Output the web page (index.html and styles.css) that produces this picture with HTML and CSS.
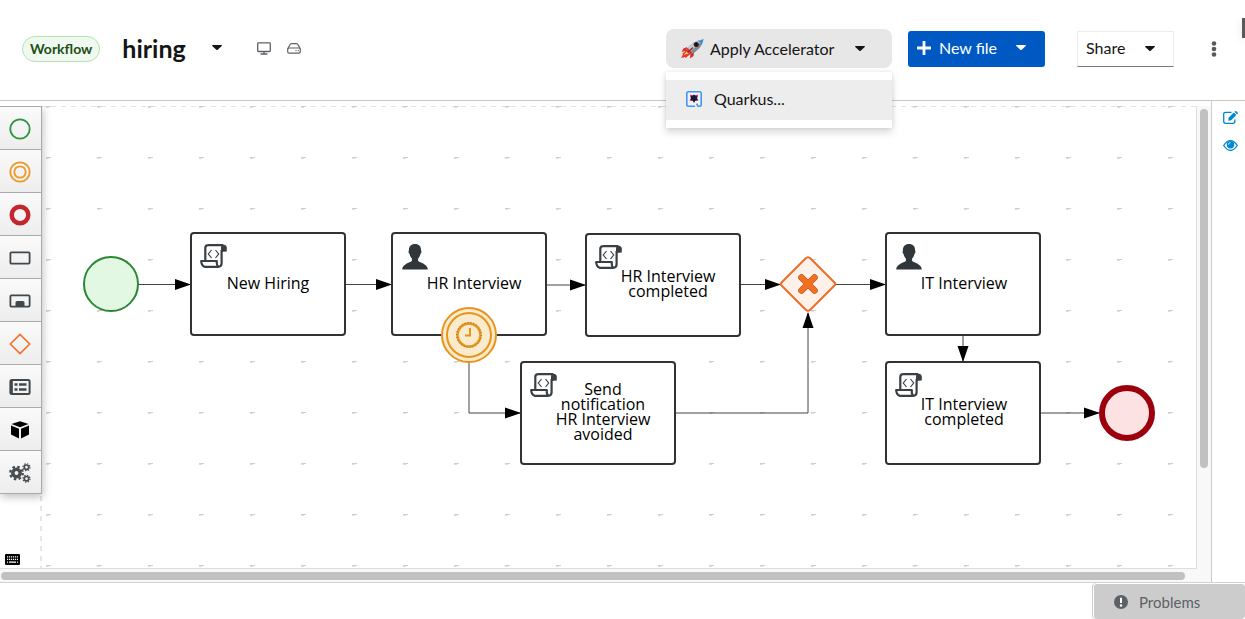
FILE: index.html
```html
<!DOCTYPE html>
<html lang="en">
<head>
<meta charset="utf-8">
<meta name="viewport" content="width=device-width, initial-scale=1">
<title>hiring</title>
<link rel="stylesheet" href="styles.css">
</head>
<body>
<svg class="defs" aria-hidden="true">
  <defs>
    <symbol id="caret" viewBox="0 0 10 5"><path d="M.6 0h8.800q.9.2.3 1L5.700 4.700q-.7.6-1.400 0L.3 1Q-.3.2.6 0z" fill="currentColor"/></symbol>
    <symbol id="script" viewBox="0 0 27 24">
      <path d="M8 1.200h15M5.300 16V4q0-2.800 2.800-2.800M21.600 6v13.500q-.2 3.300-3.500 3.300H4.500Q1.300 21.500 1.200 17h15.600c-.2 3 .3 5.300 2 5.600" fill="none" stroke="#393f44" stroke-width="2.200" stroke-linejoin="round"/>
      <path d="M21 8V3.500Q21 .4 23.500.4T26.800 3v4.600z" fill="#393f44"/>
      <path d="M11.500 6 8.300 10l3.200 4M15.500 6l3.200 4-3.200 4" fill="none" stroke="#393f44" stroke-width="1.200"/>
    </symbol>
    <symbol id="user" viewBox="0 0 26 26"><path d="M13 0c4.200 0 6.300 2.700 6.100 6.800.8.700.2 2.700-.7 3.200-.4 2.300-1.300 3.600-2.300 4.500v2.200c.8 1.900 9.900 2.900 9.700 8.900H.2c-.2-6 8.900-7 9.700-8.900v-2.200C8.900 13.600 8 12.300 7.600 10c-.9-.5-1.500-2.500-.7-3.200C6.700 2.700 8.800 0 13 0z" fill="#30373b"/></symbol>
  </defs>
</svg>

<header class="toolbar">
  <span class="badge">Workflow</span>
  <button class="file-name" type="button">hiring <svg class="caret"><use href="#caret"/></svg></button>
  <div class="storage">
    <svg width="14" height="13" viewBox="0 0 14 13" fill="none" stroke="#5e6267" stroke-width="1.300" role="img" aria-label="Browser"><rect x=".7" y=".8" width="12.600" height="8.700" rx=".8"/><path d="M3.500 12h7M7 9.500V12"/></svg>
    <svg width="14" height="11" viewBox="0 0 14 11" fill="none" stroke="#5e6267" stroke-width="1.200" role="img" aria-label="Drive"><path d="M.7 5.800 2.800 2Q3.400.8 4.700.7h4.600q1.300.1 1.900 1.300l2.100 3.800"/><rect x=".7" y="5" width="12.600" height="5.200" rx="1.400"/><path d="M8.500 7.600h1M10.800 7.600h1"/></svg>
  </div>
  <div class="accelerator">
    <button class="accelerator-toggle" type="button" aria-expanded="true">
      <svg width="23" height="20" viewBox="0 0 23 20" aria-hidden="true">
        <path d="M6 8 2.500 9.500.5 13l5-1.500zM13 13l-.5 4L9 19.500l.5-5z" fill="#d52b26"/>
        <path d="M5 11.500 1 15l1 .5L0 19l4-1 .5 1L9.500 15z" fill="#e93427"/>
        <path d="M5.500 12.500 2.500 16l2-.5L9 14z" fill="#ffc63c"/>
        <path d="M4.500 12Q10 2.500 22.500.3 21 10.500 9.500 15.500z" fill="#7b8c9a"/>
        <path d="M5 11.500Q10.500 3 22.500.3 18 5.500 8 13.500z" fill="#c5d0d9"/>
        <path d="m17 1.900 5.500-1.600-1.800 5.200z" fill="#3a92d9"/>
        <path d="m4.500 12 2.200-3.200 4.600 5.500-2 1.200z" fill="#d83a31"/>
        <circle cx="15.300" cy="5.500" r="2.600" fill="#45211f"/><circle cx="15.300" cy="5.500" r="1.200" fill="#111"/>
        <path d="m7 13 5-4.500" stroke="#a92322" stroke-width="1.600"/>
      </svg>
      <span>Apply Accelerator</span>
      <svg class="caret"><use href="#caret"/></svg>
    </button>
    <div class="menu" role="menu">
      <button class="menu-item" type="button" role="menuitem">
        <svg width="16" height="16" viewBox="0 0 16 16" aria-hidden="true"><path d="M9 15.200H2.500Q.8 15.200.8 13.500v-11Q.8.8 2.500.8h11q1.700 0 1.700 1.700v11q0 1.700-1.700 1.700H12l-1.500-2.500" fill="#e9f5ff" stroke="#4695eb" stroke-width="1.600"/><path d="m4 3.500 4 1.300L12 3.500l-.8 3.700 1.300 2.300-3.300.5L8 12.200 6.800 10l-3.300-.5 1.300-2.300z" fill="#df234e"/><path d="m8 3.500 1.500 1.300 2 .4-.7 1.900.7 2-2 .5L8 11 6.500 9.600l-2-.5.7-2-.7-1.900 2-.4z" fill="#111c38"/></svg>
        <span>Quarkus...</span>
      </button>
    </div>
  </div>
  <button class="new-file" type="button">
    <svg width="14" height="14" viewBox="0 0 14 14" aria-hidden="true"><path d="M7 0v14M0 7h14" stroke="#fff" stroke-width="2.800"/></svg>
    <span>New file</span>
    <svg class="caret"><use href="#caret"/></svg>
  </button>
  <button class="share" type="button"><span>Share</span> <svg class="caret"><use href="#caret"/></svg></button>
  <button class="kebab" type="button" aria-label="More actions"><svg width="6" height="16" viewBox="0 0 6 16" fill="#555a5f"><circle cx="3" cy="2.500" r="2.300"/><circle cx="3" cy="8" r="2.300"/><circle cx="3" cy="13.500" r="2.300"/></svg></button>
  <span class="edge-tab"></span>
</header>

<main class="workspace">
  <section class="editor">
    <div class="stage">
      <svg class="layer" aria-hidden="true">
        <defs>
          <pattern id="grid" x="46" y="0" width="51" height="51" patternUnits="userSpaceOnUse"><path d="M0 .5h5" stroke="#cfcfcf"/><path d="M0 1.500h3" stroke="#dedede"/></pattern>
          <marker id="arrow" markerUnits="userSpaceOnUse" markerWidth="16" markerHeight="12" refX="15" refY="6" orient="auto"><path d="M0 .5 16 6 0 11.500z"/></marker>
        </defs>
        <path d="M41 .5h1155" stroke="#e3e3e3" stroke-dasharray="5 5"/>
        <path d="M41 0v462" stroke="#e6e6e6" stroke-width="2" stroke-dasharray="5 5"/>
        <rect class="grid-fill" x="46" y="0" fill="url(#grid)"/>
        <g fill="none" stroke="#444">
          <path d="M138 178.500h52" marker-end="url(#arrow)"/>
          <path d="M346 178.500h45" marker-end="url(#arrow)"/>
          <path d="M547 179h38" marker-end="url(#arrow)"/>
          <path d="M741 178.500h39" marker-end="url(#arrow)"/>
          <path d="M836 178.500h49" marker-end="url(#arrow)"/>
          <path d="M469 256v51h51" marker-end="url(#arrow)"/>
          <path d="M676 307h132V207" marker-end="url(#arrow)"/>
          <path d="M963 230v25" marker-end="url(#arrow)"/>
          <path d="M1041 307h58" marker-end="url(#arrow)"/>
        </g>
        <circle cx="111" cy="178" r="27" fill="#e2f8e3" stroke="#2b8737" stroke-width="2"/>
        <path d="m805.500 152.500-24 24q-1.500 1.500 0 3l24 24q2.500 2.500 5 0l24-24q1.500-1.500 0-3l-24-24q-2.500-2.500-5 0z" fill="#fef1e9" stroke="#ed6d24" stroke-width="2"/>
        <path d="m801.500 171.500 13 13m0-13-13 13" stroke="#9b552c" stroke-width="6.500" stroke-linecap="round"/>
        <path d="m801.500 171.500 13 13m0-13-13 13" stroke="#f37021" stroke-width="5.500" stroke-linecap="round"/>
        <circle cx="1127" cy="307" r="25" fill="#fde2e4" stroke="#9d000d" stroke-width="6"/>
      </svg>
      <article class="task new-hiring"><svg class="icon-script"><use href="#script"/></svg>New Hiring</article>
      <article class="task hr-interview"><svg class="icon-user"><use href="#user"/></svg>HR Interview</article>
      <article class="task hr-completed"><svg class="icon-script"><use href="#script"/></svg>HR Interview completed</article>
      <article class="task hr-avoided"><svg class="icon-script"><use href="#script"/></svg>Send notification HR Interview avoided</article>
      <article class="task it-interview"><svg class="icon-user"><use href="#user"/></svg>IT Interview</article>
      <article class="task it-completed"><svg class="icon-script"><use href="#script"/></svg>IT Interview completed</article>
      <svg class="timer" viewBox="0 0 56 56" role="img" aria-label="Timer" fill="none" stroke="#e8941c" stroke-width="2"><circle cx="28" cy="28" r="27" fill="#faebcd"/><circle cx="28" cy="28" r="22"/><circle cx="28" cy="28" r="11.500" stroke-width="2.500"/><circle cx="28" cy="28" r="12.500" stroke="#805a20" stroke-width=".8" stroke-dasharray="1 2"/><path d="M29 21v7.500h-5"/></svg>

      <nav class="palette" aria-label="Palette">
        <button type="button" aria-label="Start events"><svg viewBox="0 0 22 22"><circle cx="11" cy="11" r="9.700" fill="none" stroke="#2d9641" stroke-width="1.800"/></svg></button>
        <button type="button" aria-label="Intermediate events"><svg viewBox="0 0 22 22" fill="none" stroke="#ec9928" stroke-width="1.800"><circle cx="11" cy="11" r="9.700"/><circle cx="11" cy="11" r="5.700"/></svg></button>
        <button type="button" aria-label="End events"><svg viewBox="0 0 22 22"><circle cx="11" cy="11" r="8.300" fill="none" stroke="#c4262e" stroke-width="4.400"/></svg></button>
        <button type="button" aria-label="Activities"><svg viewBox="0 0 22 22"><rect x="1.400" y="5.400" width="19.200" height="11.200" rx="1" fill="none" stroke="#41484d" stroke-width="1.800"/></svg></button>
        <button type="button" aria-label="Subprocesses"><svg viewBox="0 0 22 22"><rect x="1.400" y="5.400" width="19.200" height="11.200" rx="1" fill="none" stroke="#41484d" stroke-width="1.800"/><path d="M6.500 16v-3.500q0-1.500 1.500-1.500h6q1.500 0 1.500 1.500V16z" fill="#41484d"/></svg></button>
        <button type="button" aria-label="Gateways"><svg viewBox="0 0 22 22"><path d="m11 1.300 9.700 9.700-9.700 9.700L1.300 11z" fill="none" stroke="#f1742c" stroke-width="1.700" stroke-linejoin="round"/></svg></button>
        <button type="button" aria-label="Containers"><svg viewBox="0 0 22 22"><rect x="1.400" y="4" width="19.200" height="14" rx="1.500" fill="none" stroke="#41484d" stroke-width="2"/><path d="M2.500 4v14M5.500 8.500h3m1.500 0h7.500m-12 5h3m1.500 0h7.500" stroke="#41484d" stroke-width="2.700"/></svg></button>
        <button type="button" aria-label="Artifacts"><svg viewBox="0 0 22 22"><path d="m11 2.300 8.500 2.700-8.500 3.300L2.500 5zM2 6.500l8 3.200v9.800l-8-4zM20 6.500l-8 3.200v9.800l8-4z"/></svg></button>
        <button type="button" aria-label="Custom tasks"><svg viewBox="0 0 22 22" fill="none" stroke="#474d51"><circle cx="7.500" cy="11" r="3.700" stroke-width="3.500"/><circle cx="7.500" cy="11" r="6.300" stroke-width="2.200" stroke-dasharray="2.500 2.450"/><circle cx="17.500" cy="5.200" r="2.200" stroke-width="1.700"/><circle cx="17.500" cy="5.200" r="3.500" stroke-width="1.200" stroke-dasharray="1.400 1.350"/><circle cx="17.500" cy="16.700" r="2.200" stroke-width="1.700"/><circle cx="17.500" cy="16.700" r="3.500" stroke-width="1.200" stroke-dasharray="1.400 1.350"/></svg></button>
      </nav>
      <button class="keyboard" type="button" aria-label="Keyboard shortcuts"><svg width="15" height="11" viewBox="0 0 15 11"><rect width="15" height="11" rx="1"/><path d="M2 2.800h11M2 5.400h11" stroke="#fff" stroke-width="1.300" stroke-dasharray="1.200 .8"/><path d="M2 8.100h1m1 0h7m1 0h1" stroke="#fff" stroke-width="1.300"/></svg></button>
    </div>
    <div class="scroll-y"><span></span></div>
    <div class="scroll-x"><span></span></div>
  </section>
  <aside class="dock">
    <button type="button" aria-label="Properties"><svg width="15" height="13" viewBox="0 0 15 13"><path d="M8.500 1.300H2.700Q.7 1.300.7 3.300v7q0 2 2 2h7.200q2 0 2-2V8.500" fill="none" stroke="#0088ce" stroke-width="1.300"/><path d="m5.300 9.700.3-3L10.800 1.500l2.600 2.600L8.200 9.300zM11.500.8l.6-.6q.6-.4 1.200.1l1.300 1.300q.5.600.1 1.200l-.6.600z" fill="#0088ce"/></svg></button>
    <button type="button" aria-label="Preview"><svg width="15" height="11" viewBox="0 0 15 11"><path d="M.7 5.500Q7.500-4.300 14.300 5.500 7.500 15.300.7 5.500z" fill="#fff" stroke="#0088ce" stroke-width="1.300"/><circle cx="7.500" cy="4.800" r="3.700" fill="#0088ce"/><path d="M5.500 4.700q0-2 2-2" fill="none" stroke="#fff" stroke-width=".8"/></svg></button>
  </aside>
</main>

<footer class="status">
  <button class="problems" type="button"><svg width="14" height="14" viewBox="0 0 14 14" aria-hidden="true"><circle cx="7" cy="7" r="7" fill="#5d6166"/><path d="M7 2.700v5.300" stroke="#fff" stroke-width="2"/><circle cx="7" cy="10.500" r="1.200" fill="#fff"/></svg><span>Problems</span></button>
</footer>
</body>
</html>
```
FILE: styles.css
```css
* { box-sizing: border-box; }
body {
  margin: 0;
  min-height: 100vh;
  display: flex;
  flex-direction: column;
  background: #fff;
  color: #151515;
  font: 16px/24px Lato, "Noto Sans", sans-serif;
}
button { margin: 0; padding: 0; border: 0; background: none; color: inherit; font: inherit; cursor: pointer; }
svg { display: block; flex: none; }
.defs { position: absolute; width: 0; height: 0; }
.caret { width: 10px; height: 5px; }

.toolbar {
  position: relative;
  display: flex;
  align-items: center;
  padding: 29px 26px 32px 22px;
  border-bottom: 1px solid #c7c7c7;
}
.badge {
  padding: 0 7px;
  border: 1px solid #b3e2b3;
  border-radius: 13px;
  background: #f0f9f0;
  color: #1e4f18;
  font-size: 14px;
  font-weight: 700;
}
.file-name { display: flex; align-items: center; gap: 26px; margin-left: 22px; padding-bottom: 2px; font-size: 25px; font-weight: 700; line-height: 32px; }
.storage { display: flex; align-items: center; gap: 16px; margin-left: 35px; }
.accelerator { position: relative; width: 226px; margin-left: auto; }
.accelerator-toggle {
  display: flex;
  align-items: center;
  width: 100%;
  height: 39px;
  padding: 0 27px 0 15px;
  border-radius: 8px;
  background: #e7e7e7;
}
.accelerator-toggle span { margin-left: 6px; }
.accelerator-toggle .caret { margin-left: auto; }
.menu {
  position: absolute;
  z-index: 3;
  top: 43px;
  left: 0;
  width: 100%;
  padding: 8px 0;
  background: #fff;
  box-shadow: 0 4px 8px rgba(3, 3, 3, .16), 0 0 4px rgba(3, 3, 3, .08);
}
.menu-item { display: flex; align-items: center; gap: 12px; width: 100%; height: 40px; padding: 0 20px 2px; background: #ededed; }
.new-file {
  display: flex;
  align-items: center;
  gap: 8px;
  width: 137px;
  height: 36px;
  margin-left: 16px;
  padding: 0 19px 2px 9px;
  border-radius: 3px;
  background: #0059c3;
  color: #fff;
}
.new-file .caret, .share .caret { margin-left: auto; }
.share {
  display: flex;
  align-items: center;
  width: 97px;
  height: 36px;
  margin-left: 32px;
  padding: 0 18px 1px 8px;
  border: 1px solid #ededed;
  border-bottom-color: #77797c;
}
.kebab { margin-left: 35px; padding: 4px 2px; }
.edge-tab { position: absolute; top: 18px; right: 0; width: 3px; height: 20px; background: #595959; box-shadow: 0 2px 8px rgba(0, 0, 0, .15); }

.workspace { flex: 1; display: flex; }
.editor {
  flex: 1;
  min-width: 0;
  display: grid;
  grid-template: 1fr 13px / 1fr 14px;
  padding-top: 5px;
}
.stage {
  position: relative;
  min-height: 463px;
  overflow: hidden;
  border-right: 1px solid #ddd;
  border-bottom: 1px solid #ddd;
}
.layer { position: absolute; inset: 0; width: 100%; height: 100%; }
.grid-fill { width: 100%; height: 100%; }
.scroll-y { padding: 3px 0 0 3px; background: #f8f8f8; }
.scroll-y span { display: block; width: 8px; height: 78%; border-radius: 4px; background: #c1c1c1; }
.scroll-x { grid-column: 1 / -1; padding: 3px 26px 0 1px; background: #f8f8f8; }
.scroll-x span { display: block; height: 8px; border-radius: 4px; background: #c1c1c1; }

.task {
  position: absolute;
  display: flex;
  align-items: center;
  justify-content: center;
  width: 156px;
  height: 104px;
  padding: 0 28px 2px;
  border: 2px solid #303336;
  border-radius: 4px;
  background: #fff;
  color: #000;
  font: 16px/15px "Open Sans", "Noto Sans", sans-serif;
  text-align: center;
}
.task svg { position: absolute; top: 10px; }
.icon-script { left: 8px; width: 27px; height: 24px; }
.icon-user { left: 9px; width: 26px; height: 26px; }
.new-hiring { left: 190px; top: 126px; }
.hr-interview { left: 391px; top: 126px; padding: 0 20px 2px 30px; }
.hr-completed { left: 585px; top: 127px; padding: 0 20px 2px 30px; }
.hr-avoided { left: 520px; top: 255px; padding: 0 20px 2px 30px; }
.it-interview { left: 885px; top: 126px; padding: 0 20px 2px 22px; }
.it-completed { left: 885px; top: 255px; padding: 0 20px 2px 22px; }
.timer { position: absolute; left: 441px; top: 201px; width: 56px; height: 56px; }

.palette { position: absolute; top: 0; left: 0; width: 42px; border-right: 1px solid #aaa; border-top: 1px solid #aaa; box-shadow: 1px 3px 8px rgba(3, 3, 3, .25); }
.palette button { display: grid; place-items: center; width: 100%; height: 43px; padding: 1px 1px 0 0; border-bottom: 1px solid #aaa; background: linear-gradient(#fafafa, #ededed); }
.palette svg { width: 22px; height: 22px; }
.keyboard { position: absolute; left: 5px; bottom: 3px; }

.dock { display: flex; flex-direction: column; align-items: center; gap: 16px; width: 34px; padding: 10px 0 0 3px; border-left: 1px solid #ccc; }

.status { display: flex; justify-content: flex-end; border-top: 1px solid #d2d2d2; }
.problems {
  display: flex;
  align-items: center;
  gap: 11px;
  width: 152px;
  height: 36px;
  padding: 0 20px;
  border: solid #fff;
  border-width: 1px 0 0 1px;
  border-radius: 4px;
  background: #ccc;
  box-shadow: -1px 0 #ccc;
  color: #5d6166;
  font-size: 15px;
}
```
